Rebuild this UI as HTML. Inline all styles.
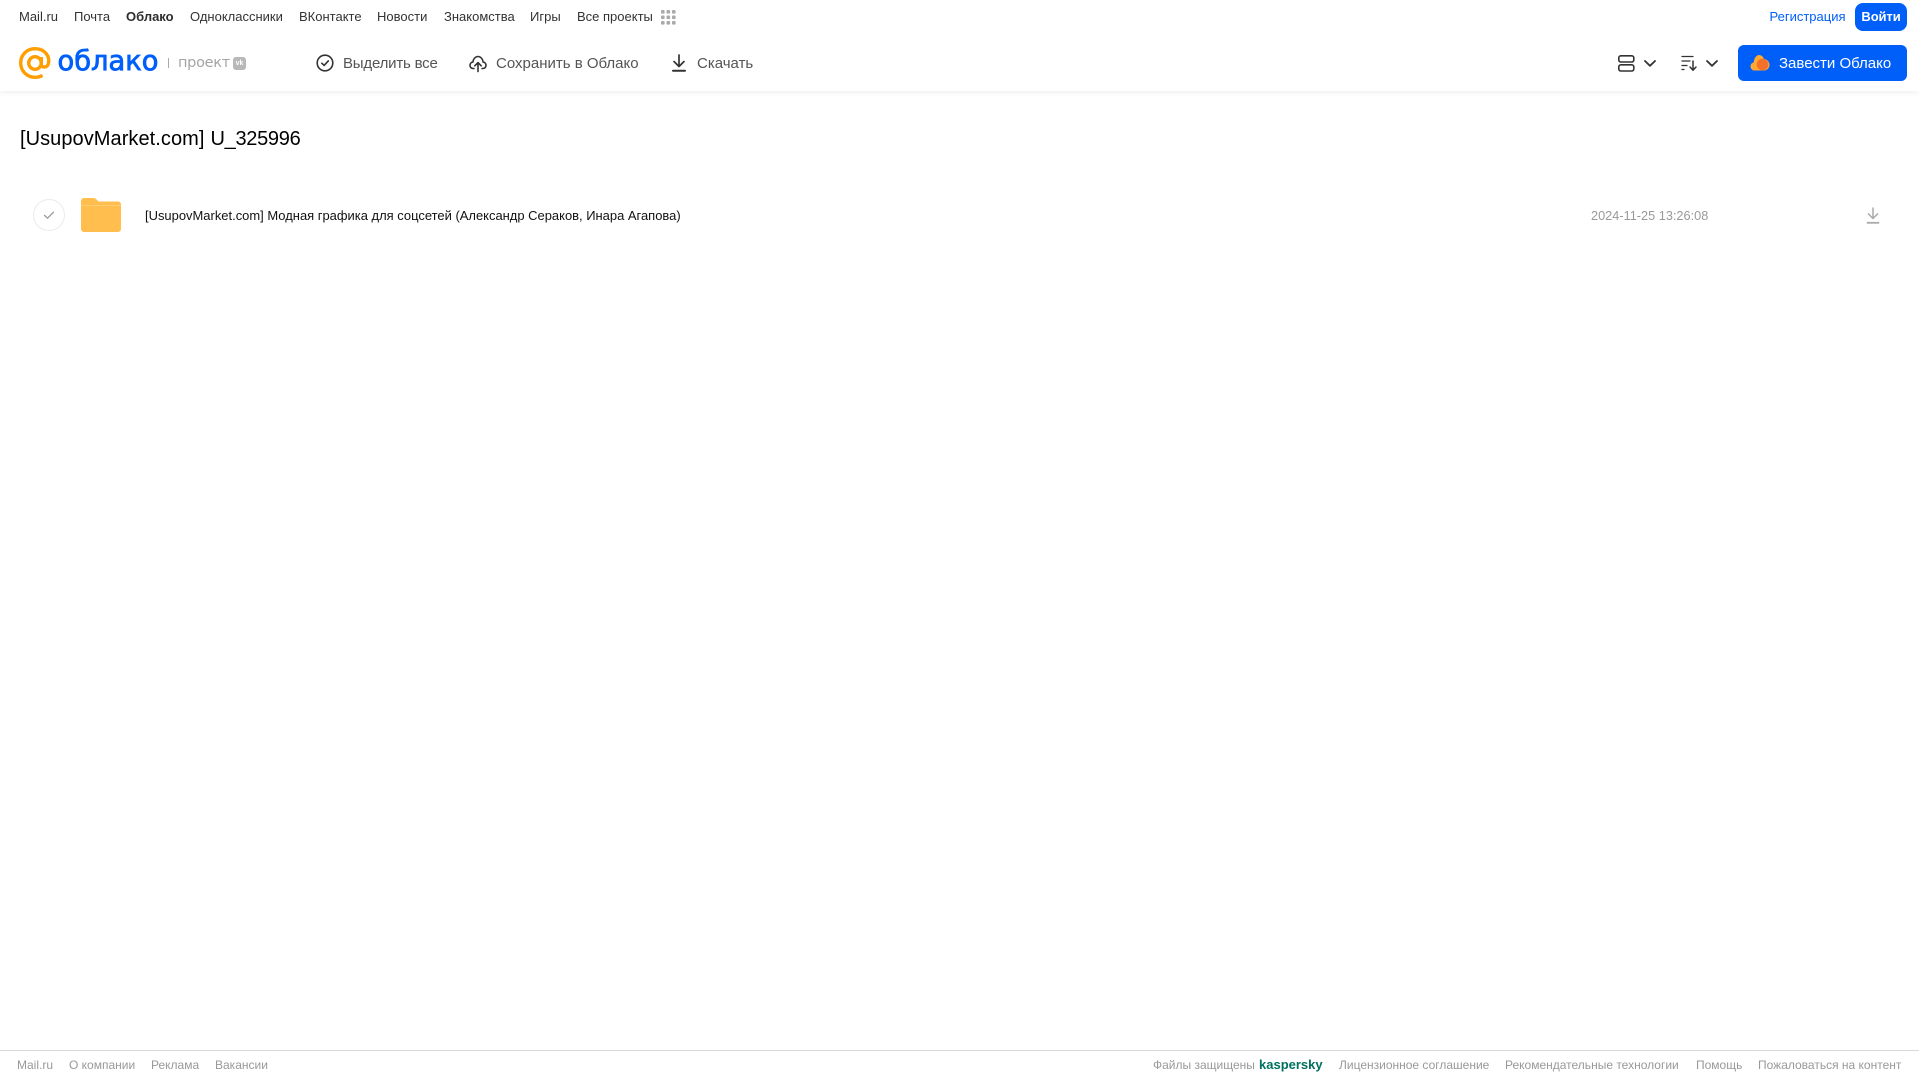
<!DOCTYPE html>
<html lang="ru"><head><meta charset="utf-8"><title>Облако</title>
<style>
html,body{margin:0;padding:0;background:#fff;width:1919px;height:1079px;overflow:hidden;font-family:"Liberation Sans",sans-serif}
.t{position:absolute;white-space:nowrap;line-height:16px}
.n{top:9px;font-size:13px;color:#333;transform-origin:0 50%}
.a{top:54.500px;font-size:15px;color:#555;line-height:18px}
.f{top:1057px;font-size:12px;color:#999}
svg{position:absolute;overflow:visible}
#shadow{position:absolute;left:0;top:0;width:1919px;height:91px;background:#fff;box-shadow:0 1px 6px rgba(0,0,0,.08)}
</style></head><body>
<div id="shadow"></div>
<span class="t n" style="left:19px">Mail.ru</span>
<span class="t n" style="left:74px">Почта</span>
<span class="t n" style="left:126px;font-weight:bold;color:#2c2d2e">Облако</span>
<span class="t n" style="left:190px">Одноклассники</span>
<span class="t n" style="left:299px">ВКонтакте</span>
<span class="t n" style="left:377px">Новости</span>
<span class="t n" style="left:444px">Знакомства</span>
<span class="t n" style="left:530px">Игры</span>
<span class="t n" style="left:577px">Все проекты</span>
<svg style="left:661px;top:10px" width="15" height="15" fill="#aaa"><rect x="0" y="0" width="3.6" height="3.6" rx="1"/><rect x="5.5" y="0" width="3.6" height="3.6" rx="1"/><rect x="11" y="0" width="3.6" height="3.6" rx="1"/><rect x="0" y="5.5" width="3.6" height="3.6" rx="1"/><rect x="5.5" y="5.5" width="3.6" height="3.6" rx="1"/><rect x="11" y="5.5" width="3.6" height="3.6" rx="1"/><rect x="0" y="11" width="3.6" height="3.6" rx="1"/><rect x="5.5" y="11" width="3.6" height="3.6" rx="1"/><rect x="11" y="11" width="3.6" height="3.6" rx="1"/></svg>

<svg style="left:19px;top:47px" width="32" height="33" viewBox="0 0 32 33" fill="none" stroke="#ff9e00" stroke-width="3.4"><circle cx="16" cy="16" r="6.3"/><path d="M22.3 10v7.5c0 3.5 5.6 3.5 7-.5 2-7-3-15.300-13.300-15.300C7.800 1.700 1.700 8 1.700 16S8 30.300 16 30.300c3 0 5.500-.7 7.500-2"/></svg>
<span class="t" style="left:57.500px;top:43px;font-size:27.300px;line-height:38px;color:#005ff9;font-family:'DejaVu Sans',sans-serif;-webkit-text-stroke:.8px #005ff9">облако</span>
<div style="position:absolute;left:168px;top:58px;width:1px;height:10px;background:#aaa"></div>
<span class="t" style="left:178px;top:54px;font-size:14.500px;line-height:18px;color:#a5a5a5;font-family:'DejaVu Sans',sans-serif;letter-spacing:-.3px">проект</span>
<div style="position:absolute;left:233px;top:57px;width:13px;height:13px;background:#b8b8b8;border-radius:3px;color:#fff;font-size:7px;line-height:13px;text-align:center;font-weight:bold">vk</div>

<svg style="left:316px;top:54px" width="18" height="18" fill="none" stroke="#333" stroke-width="1.600" stroke-linecap="round" stroke-linejoin="round"><circle cx="9" cy="9" r="7.800"/><path d="M5.800 9.200l2.300 2.200 4.200-4.500"/></svg>
<span class="t a" style="left:343px;letter-spacing:-.2px">Выделить все</span>
<svg style="left:469px;top:54px" width="18" height="18" fill="none" stroke="#333" stroke-width="1.600" stroke-linecap="round" stroke-linejoin="round"><path d="M5 14.500H4.200C2.200 14.500 1 13 1 11.300c0-1.700 1.200-3 2.800-3.200C4.200 5 6.300 2.500 9 2.500s4.800 2.500 5.200 5.600c1.600.2 2.800 1.500 2.800 3.200 0 1.700-1.200 3.200-3.200 3.200H13"/><path d="M9 17.500V9M5.800 11.800L9 8.600l3.200 3.200"/></svg>
<span class="t a" style="left:496px">Сохранить в Облако</span>
<svg style="left:672px;top:54px" width="14" height="18" fill="none" stroke="#333" stroke-width="1.700" stroke-linecap="round" stroke-linejoin="round" viewBox="0 0 14 18"><path d="M7 1v11M2 7.500l5 5 5-5"/><path d="M1 16.800h12" stroke-width="2"/></svg>
<span class="t a" style="left:697px">Скачать</span>

<svg style="left:1618px;top:55px" width="17" height="17" fill="none" stroke="#333" stroke-width="1.600"><rect x=".8" y=".8" width="15" height="6.200" rx="2"/><rect x=".8" y="9.800" width="15" height="6.200" rx="2"/></svg>
<svg style="left:1644px;top:60px" width="12" height="7" fill="none" stroke="#333" stroke-width="1.800" stroke-linecap="round" stroke-linejoin="round"><path d="M1 1l5 4.800L11 1"/></svg>
<svg style="left:1681px;top:55px" width="17" height="16" fill="none" stroke="#333" stroke-width="1.300" stroke-linecap="round" stroke-linejoin="round"><path d="M1 1.500h11M1 6h8M1 10.500h5M1 14.500h2"/><path d="M12 6v9M9 12l3 3.200 3-3.200" stroke-width="1.500"/></svg>
<svg style="left:1706px;top:60px" width="12" height="7" fill="none" stroke="#333" stroke-width="1.800" stroke-linecap="round" stroke-linejoin="round"><path d="M1 1l5 4.800L11 1"/></svg>

<span class="t" style="left:1769.500px;top:9px;font-size:13px;color:#005ff9">Регистрация</span>
<div style="position:absolute;left:1855px;top:3px;width:52px;height:28px;background:#005ff9;border-radius:8px;color:#fff;font-size:13px;font-weight:bold;line-height:28px;text-align:center;letter-spacing:-.1px">Войти</div>
<div style="position:absolute;left:1738px;top:45px;width:169px;height:36px;background:#005ff9;border-radius:6px"></div>
<svg style="left:1750px;top:54px" width="20" height="17"><path d="M4.500 16.500C2 16.500.500 14.500.500 12.300.500 10.300 2 8.800 3.600 8.500 4 4.500 6.300 1 9 1c2.500 0 4.200 1.800 5 4 3 .200 5.500 2.800 5.500 5.800 0 3.200-2.500 5.700-5.500 5.700z" fill="#ffa930"/><circle cx="12.500" cy="10.500" r="5.800" fill="#f4712b"/></svg>
<span class="t" style="left:1779px;top:54.500px;font-size:15px;line-height:18px;color:#fff">Завести Облако</span>

<span class="t" style="left:20px;top:125.500px;font-size:20px;line-height:26px;color:#000;letter-spacing:.06px">[UsupovMarket.com]</span>
<span class="t" style="left:210.500px;top:125.500px;font-size:20px;line-height:26px;color:#000;letter-spacing:-.3px">U_325996</span>

<svg style="left:33px;top:199px" width="32" height="32" fill="none"><circle cx="16" cy="16" r="15.500" stroke="#ebebeb"/><path d="M11.500 16.300l3 2.900 6-6" stroke="#999" stroke-width="1.300" stroke-linecap="round" stroke-linejoin="round"/></svg>
<svg style="left:81px;top:198px" width="40" height="34"><path d="M0 3a3 3 0 0 1 3-3h9c2 0 3 .7 4 2l1.500 1.500H37a3 3 0 0 1 3 3V31a3 3 0 0 1-3 3H3a3 3 0 0 1-3-3z" fill="#ffbe4d"/><path d="M0 7h40v1H0z" fill="#ffcc70"/></svg>
<span class="t" style="left:145px;top:207.500px;font-size:12.960px;color:#111">[UsupovMarket.com] Модная графика для соцсетей (Александр Сераков, Инара Агапова)</span>
<span class="t" style="left:1591px;top:207.500px;font-size:12.740px;color:#999">2024-11-25 13:26:08</span>
<svg style="left:1866px;top:207px" width="14" height="17" fill="none" stroke="#aaa" stroke-width="1.500" stroke-linejoin="round"><path d="M7 .5V11M2 6.500L7 11.500l5-5"/><path d="M.8 15.800h12.400" stroke-width="1.800"/></svg>

<div style="position:absolute;left:0;top:1050px;width:1919px;height:1px;background:#d9d9d9"></div>
<span class="t f" style="left:17px">Mail.ru</span>
<span class="t f" style="left:69px">О компании</span>
<span class="t f" style="left:151px">Реклама</span>
<span class="t f" style="left:215px">Вакансии</span>
<span class="t f" style="left:1153px">Файлы защищены</span>
<span class="t f" style="left:1259px;font-size:13px;font-weight:bold;color:#00705f">kaspersky</span>
<span class="t f" style="left:1339px">Лицензионное соглашение</span>
<span class="t f" style="left:1505px">Рекомендательные технологии</span>
<span class="t f" style="left:1696px">Помощь</span>
<span class="t f" style="left:1758px">Пожаловаться на контент</span>
</body></html>
